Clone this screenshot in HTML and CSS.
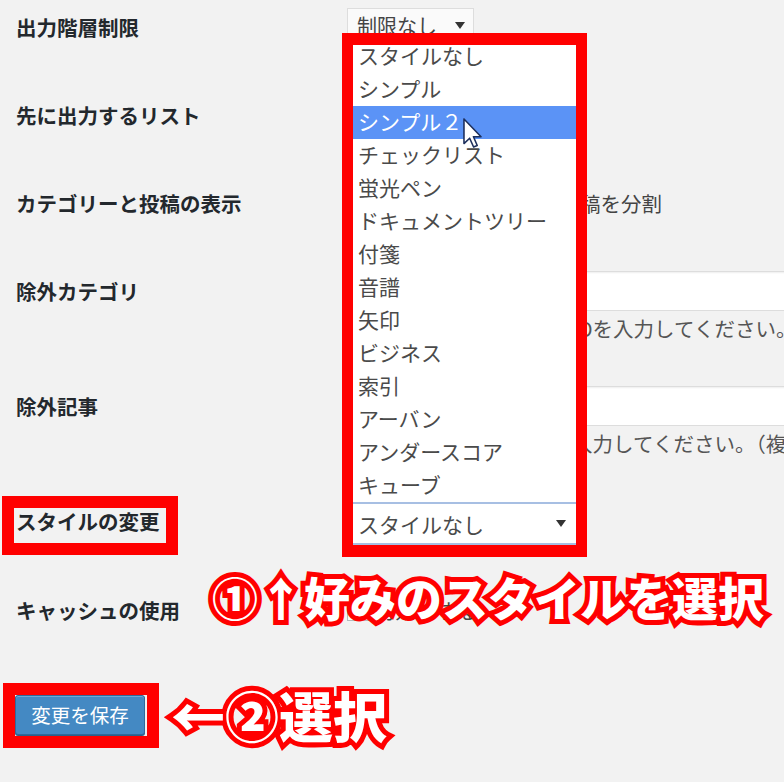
FILE: index.html
```html
<!DOCTYPE html>
<html lang="ja">
<head>
  <meta charset="UTF-8">
  <title>スタイルの変更</title>
  <link rel="stylesheet" href="styles.css">
</head>
<body>
  <div class="page">

    <div class="form-table">
      <div class="row">
        <div class="label">出力階層制限</div>
        <div class="field">
          <span class="select-mini">制限なし<span class="caret"></span></span>
        </div>
      </div>

      <div class="row">
        <div class="label">先に出力するリスト</div>
        <div class="field">
          <span class="select-mini">目次<span class="caret"></span></span>
        </div>
      </div>

      <div class="row">
        <div class="label">カテゴリーと投稿の表示</div>
        <div class="field field-inline">
          <span class="check"></span>
          <span class="field-text">カテゴリーの表示と投稿を分割</span>
        </div>
      </div>

      <div class="row row-desc">
        <div class="label">除外カテゴリ</div>
        <div class="field">
          <span class="text-input"></span>
          <p class="desc">除外したいカテゴリーのIDを入力してください。（複数ある場合はカンマ区切り）</p>
        </div>
      </div>

      <div class="row row-desc">
        <div class="label">除外記事</div>
        <div class="field">
          <span class="text-input"></span>
          <p class="desc">除外する投稿記事のIDを入力してください。（複数ある場合はカンマ区切り）</p>
        </div>
      </div>

      <div class="row row-mark">
        <div class="label"><span class="mark">スタイルの変更</span></div>
        <div class="field"></div>
      </div>

      <div class="row">
        <div class="label">キャッシュの使用</div>
        <div class="field field-inline">
          <span class="check"></span>
          <span class="field-text">有効にする</span>
        </div>
      </div>
    </div>

    <div class="submit-row">
      <span class="mark-button"><button type="button" class="button-primary">変更を保存</button></span>
      <span class="note note-save">←②選択</span>
    </div>

    <!-- 開いているセレクトのリスト -->
    <div class="dropdown">
      <ul class="dd-list">
        <li>スタイルなし</li>
        <li>シンプル</li>
        <li class="active">シンプル２</li>
        <li>チェックリスト</li>
        <li>蛍光ペン</li>
        <li>ドキュメントツリー</li>
        <li>付箋</li>
        <li>音譜</li>
        <li>矢印</li>
        <li>ビジネス</li>
        <li>索引</li>
        <li>アーバン</li>
        <li>アンダースコア</li>
        <li>キューブ</li>
      </ul>
      <div class="dd-select">スタイルなし<span class="caret"></span></div>
    </div>

    <svg class="cursor" viewBox="0 0 12 19" width="19" height="30">
      <path d="M0.6 0.6 V16.2 L4.2 12.8 L6.7 18.4 L9 17.4 L6.6 11.9 L11.4 11.9 Z" fill="#fff" stroke="#1d2f5c" stroke-width="1" stroke-linejoin="round"/>
    </svg>

    <div class="note note-style">①↑好みのスタイルを選択</div>

  </div>
</body>
</html>
```

FILE: styles.css
```css
body {
  margin: 0;
  background-color: #f2f2f2;
  font-family: "Noto Sans CJK JP", "Liberation Sans", sans-serif;
  color: #23282d;
}

.page {
  position: relative;
  height: 782px;
  padding: 7px 16px 0;
  box-sizing: border-box;
  overflow: hidden;
}

.form-table {
  display: flex;
  flex-direction: column;
}

.row {
  display: grid;
  grid-template-columns: 331px 1fr;
  margin-bottom: 48px;
}

.row-desc {
  margin-bottom: 43px;
}

.row-mark {
  margin-bottom: 47px;
}

.label {
  font-size: 20.5px;
  font-weight: 700;
  line-height: 40px;
  white-space: nowrap;
}

.label .mark {
  display: block;
  width: fit-content;
  height: 35px;
  margin: 7px 0 0 -2px;
  padding: 0 6px 0 2px;
  line-height: 27px;
  outline: 12px solid #ff0000;
}

.field {
  display: flex;
  flex-direction: column;
  align-items: flex-start;
  min-height: 40px;
}

.field-inline {
  flex-direction: row;
  align-items: center;
  gap: 6px;
}

.field-text {
  font-size: 20.5px;
  color: #444;
  white-space: nowrap;
}

.select-mini {
  display: flex;
  align-items: center;
  justify-content: space-between;
  width: 127px;
  height: 34px;
  margin-top: 1px;
  padding: 0 8px 0 9px;
  box-sizing: border-box;
  background-color: #fafafa;
  border: 1px solid #dddddd;
  font-size: 20px;
  color: #444;
}

.caret {
  width: 0;
  height: 0;
  border-left: 5px solid transparent;
  border-right: 5px solid transparent;
  border-top: 7px solid #333;
}

.check {
  width: 22px;
  height: 22px;
  box-sizing: border-box;
  background-color: #fff;
  border: 1px solid #b4b9be;
  box-shadow: inset 0 1px 2px rgba(0, 0, 0, 0.1);
}

.text-input {
  display: block;
  width: 540px;
  height: 40px;
  box-sizing: border-box;
  background-color: #fff;
  border: 1px solid #dddddd;
  box-shadow: inset 0 1px 2px rgba(0, 0, 0, 0.07);
}

.desc {
  margin: 2px 0 0;
  font-size: 20.5px;
  line-height: 30px;
  color: #555;
  white-space: nowrap;
}

.submit-row {
  display: flex;
  align-items: center;
  margin-top: 10px;
}

.mark-button {
  display: block;
  margin-left: -1px;
  padding: 0 2px 1px 0;
  outline: 12px solid #ff0000;
}

.button-primary {
  display: block;
  width: 130px;
  height: 40px;
  padding: 0;
  background-color: #4489c3;
  border: 1px solid #30699a;
  border-radius: 3px;
  box-shadow: inset 0 1px 0 rgba(150, 200, 235, 0.5), 0 1px 0 #2a5f8a;
  font-family: inherit;
  font-size: 19.5px;
  color: #fff;
}

/* 注釈の文字 */
.note {
  font-weight: 900;
  color: #fff;
  line-height: 1;
  white-space: nowrap;
  -webkit-text-stroke: 10px #ff0000;
  paint-order: stroke fill;
}

.note-save {
  margin-left: 24px;
  font-size: 54px;
}

.note-style {
  position: absolute;
  left: 212px;
  top: 573px;
  font-size: 46px;
}

.dropdown {
  position: absolute;
  left: 342px;
  top: 33px;
  width: 223px;
  height: 500px;
  background-color: #fff;
  border: solid #ff0000;
  border-width: 12px 11px;
  overflow: hidden;
}

.dd-list {
  list-style: none;
  margin: -5px 0 0;
  padding: 0;
}

.dd-list li {
  height: 33px;
  padding-left: 5px;
  font-size: 21px;
  line-height: 30px;
  color: #4a4a4a;
  white-space: nowrap;
}

.dd-list li.active {
  background-color: #5b93f6;
  color: #fff;
}

.dd-select {
  display: flex;
  align-items: center;
  justify-content: space-between;
  height: 39px;
  padding: 0 10px 0 5px;
  border-top: 2px solid #a7bfe3;
  border-bottom: 2px solid #a7bfe3;
  font-size: 21px;
  color: #4a4a4a;
}

.cursor {
  position: absolute;
  left: 463px;
  top: 118px;
}
```
